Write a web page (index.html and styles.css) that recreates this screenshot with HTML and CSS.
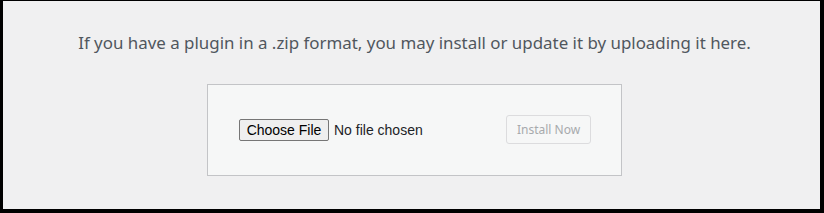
FILE: index.html
```html
<!DOCTYPE html>
<html>
<head>
  <meta charset="UTF-8">
  <title>Upload Plugin</title>
  <link rel="stylesheet" href="styles.css">
</head>
<body>
  <div class="screen">
    <p class="install-help">If you have a plugin in a .zip format, you may install or update it by uploading it here.</p>

    <form class="upload-form">
      <div class="file-field">
        <span class="file-button">Choose File</span>
        <span class="file-name">No file chosen</span>
      </div>
      <button class="install-button" disabled>Install Now</button>
    </form>
  </div>
</body>
</html>
```

FILE: styles.css
```css
html, body {
  margin: 0;
  padding: 0;
}

body {
  width: 824px;
  height: 213px;
  background: #000;
  overflow: hidden;
}

.screen {
  box-sizing: border-box;
  height: 208px;
  margin: 1px 4px 0 3px;
  padding: 0 0 0 6px;
  background: #f0f0f1;
  font-family: "Noto Sans", "Open Sans", sans-serif;
  overflow: hidden;
}

.install-help {
  margin: 0;
  padding-top: 29px;
  text-align: center;
  font-size: 16.9px;
  line-height: 26px;
  color: #50575e;
}

.upload-form {
  box-sizing: border-box;
  width: 415px;
  height: 92px;
  margin: 28px auto 0;
  padding: 0 30px 0 31px;
  display: flex;
  align-items: center;
  justify-content: space-between;
  background: #f6f7f7;
  border: 1px solid #c3c4c7;
}

.file-field {
  display: flex;
  align-items: center;
  gap: 5px;
  font-family: "Liberation Sans", Arial, sans-serif;
  font-size: 14px;
  color: #000;
}

.file-button {
  box-sizing: border-box;
  height: 22px;
  width: 90px;
  display: flex;
  align-items: center;
  justify-content: center;
  background: #efefef;
  border: 1px solid #767676;
  border-radius: 2px;
}

.file-name {
  color: #1d2327;
}

.install-button {
  box-sizing: border-box;
  height: 29px;
  width: 85px;
  margin-top: -1px;
  padding: 0;
  white-space: nowrap;
  font-family: "Noto Sans", "Open Sans", sans-serif;
  font-size: 12px;
  color: #a7aaad;
  background: #f6f7f7;
  border: 1px solid #dcdcde;
  border-radius: 3px;
}
```
